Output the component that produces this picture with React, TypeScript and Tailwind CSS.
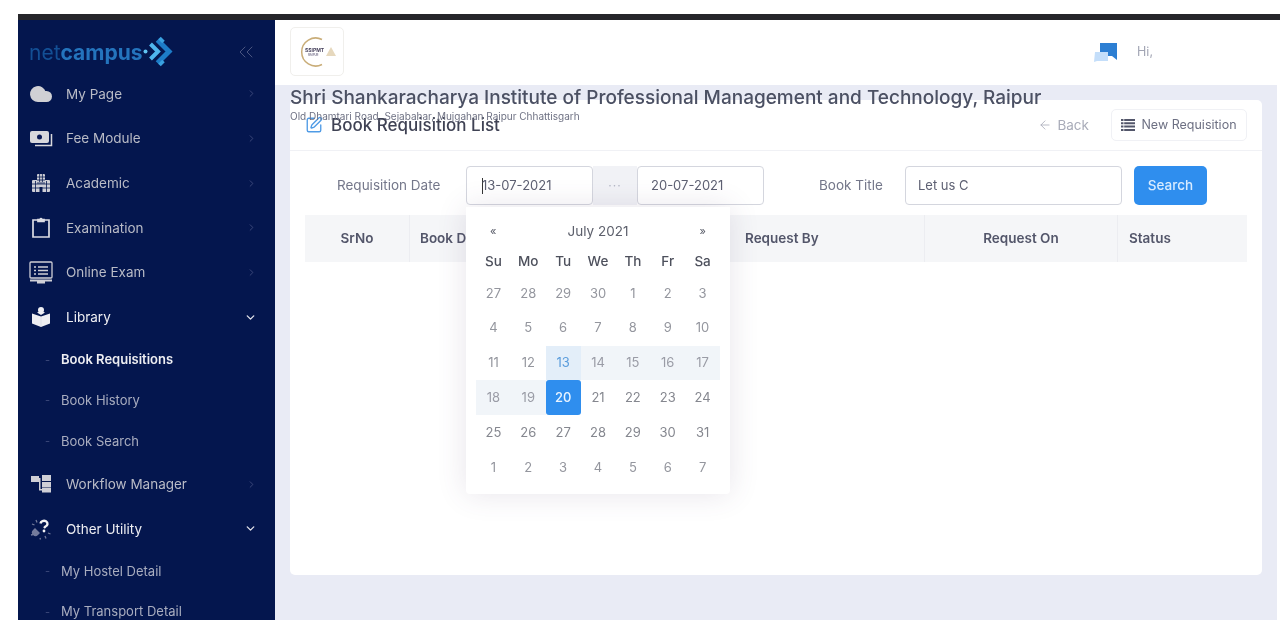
import { ArrowLeft, ChevronDown, ChevronRight, ChevronsLeft, Cloud, SquarePen } from "lucide-react";
import type { ReactNode } from "react";

const font = "font-['Inter','Liberation_Sans',sans-serif]";

function FeeIcon() {
  return (
    <svg width="24" height="22" viewBox="0 0 24 22" fill="none">
      <rect x="1" y="3" width="19" height="12" rx="2" fill="#d8d8dc" />
      <circle cx="10.500" cy="9" r="2.500" fill="#0a1a55" />
      <path d="M22.500 6v11.500H6" stroke="#d8d8dc" strokeWidth="1.500" />
    </svg>
  );
}

function AcademicIcon() {
  return (
    <svg width="18" height="18" viewBox="0 0 18 18" fill="#cfcfd6">
      <path d="M5 1q0-1 1-1h6q1 0 1 1v5h4q1 0 1 1v10q0 1-1 1H1q-1 0-1-1V7q0-1 1-1h4z" />
      <path d="M7.600 0v8M10.400 0v8M5 3h8M5 6h8M5 9h8M0 10h18M0 14h18M3.500 7v11M14.500 7v11" stroke="#04164e" strokeWidth="0.800" fill="none" />
      <path d="M7.500 13h3v5h-3z" fill="#04164e" />
    </svg>
  );
}

function ClipboardIcon() {
  return (
    <svg width="18" height="21" viewBox="0 0 18 21" fill="none" stroke="#dcdce4" strokeWidth="1.700">
      <path d="M6 3H1v17h16V3h-5" />
      <path d="M6 4.500V2.500h2q1-2 2 0h2v2z" fill="#dcdce4" />
    </svg>
  );
}

function ExamIcon() {
  return (
    <svg width="24" height="23" viewBox="0 0 24 23" fill="none" stroke="#cfcfd6" strokeWidth="1.300">
      <rect x="1" y="1" width="22" height="16" rx="1" />
      <path d="M5 6h2M9 6h10M5 9.500h2M9 9.500h10M5 13h2M9 13h10" />
      <path d="M1 19.500h22M8 21.500h8" strokeWidth="1.800" />
    </svg>
  );
}

function LibraryIcon() {
  return (
    <svg width="20" height="20" viewBox="0 0 20 20" fill="#eeeef2">
      <circle cx="10" cy="3" r="3" />
      <path d="M1 6.500l9 3 9-3v10l-9 3.500-9-3.500z" />
      <path d="M6 5.500q4-2 8 0l-4 2.500z" />
      <path d="M10 10v9.500" stroke="#c9ccd8" strokeWidth="0.500" />
    </svg>
  );
}

function WorkflowIcon() {
  return (
    <svg width="20" height="18" viewBox="0 0 20 18" fill="#cfcfd6">
      <rect x="0" y="1" width="8" height="6" />
      <rect x="11" y="0" width="9" height="6" />
      <rect x="11" y="7" width="9" height="5" />
      <rect x="11" y="12.500" width="9" height="5" />
      <path d="M8 3h1.500v11H11v1.500H8z" />
    </svg>
  );
}

function UtilityIcon() {
  return (
    <svg width="22" height="22" viewBox="0 0 22 22" fill="none">
      <path d="M10.500 5.500a3.500 3 0 1 1 5 3l-1.500 1.500" stroke="#f2f2f5" strokeWidth="2.400" />
      <circle cx="14" cy="13" r="1.400" fill="#f2f2f5" />
      <path d="M5 10l5 5-2 2a3.500 3.500 0 0 1-5-5z" fill="#747b9c" />
      <path d="M6 2l1 2.500M2 6l2.500 1M18 15l2.500 1M15 18l1 2.500M1 17l2-.500M10 20l.500 1.500" stroke="#747b9c" strokeWidth="1.300" />
    </svg>
  );
}

function Logo() {
  return (
    <div className="flex items-center">
      <span className="text-[21px] leading-none text-[#134f95]">net</span>
      <span className="text-[21px] leading-none font-bold text-[#2474bd]">campus</span>
      <svg width="32" height="32" viewBox="0 0 31 32" fill="none">
        <circle cx="2" cy="15.500" r="2" fill="#62c3f2" />
        <path d="M7 8l7.500 7.500L7 23" stroke="#4fb6ee" strokeWidth="4" />
        <path d="M14 4l11.500 11.500L14 27" stroke="#1d7cc8" strokeWidth="5" />
        <path d="M16 29l4-4" stroke="#3aa1e0" strokeWidth="3.500" />
        <path d="M16 2l4 4" stroke="#3aa1e0" strokeWidth="3.500" />
      </svg>
    </div>
  );
}

function CollegeLogo() {
  return (
    <svg width="38" height="32" viewBox="0 0 38 32" fill="none">
      <path d="M22 3.500A14 14 0 1 0 22 28.500" stroke="#c9ad78" strokeWidth="1.500" />
      <text x="5" y="15.500" fontSize="5" fontWeight="700" fill="#4b4660">SSIPMT</text>
      <text x="8" y="20" fontSize="2.800" fontWeight="600" fill="#6b6680">RAIPUR</text>
      <path d="M31 11l5 9H26z" fill="#e6d8bd" />
    </svg>
  );
}

function MessageIcon() {
  return (
    <svg width="24" height="20" viewBox="0 0 24 20" fill="none">
      <path d="M6 0h17v17l-5-4H6z" fill="#2d7fd3" />
      <path d="M1 9h13v9H3l-3 1z" fill="#c4defa" />
    </svg>
  );
}

function ListIcon() {
  return (
    <svg width="14" height="12" viewBox="0 0 14 12" fill="#53566a">
      <path d="M0 0h14v2H0zM0 3.300h14v2H0zM0 6.600h14v2H0zM0 10h14v2H0z" />
      <path d="M2.500 0h.700v12h-.700z" fill="#ffffff" />
    </svg>
  );
}

type NavItem = { label: string; icon: ReactNode; open?: boolean; bright?: boolean };

function NavRow({ label, icon, open, bright }: NavItem) {
  return (
    <div className="flex h-[44.700px] shrink-0 items-center">
      <div className="mr-[2px] flex w-[46px] justify-center">{icon}</div>
      <span className={`text-[13.500px] ${bright ? "text-[#eeeef2]" : "text-[#b9bbc6]"}`}>{label}</span>
      <span className="ml-auto mr-[18px]">
        {open ? (
          <ChevronDown size={13} strokeWidth={2.500} className="text-[#e2e2ea]" />
        ) : (
          <ChevronRight size={11} className="text-[#3e4a7c]" />
        )}
      </span>
    </div>
  );
}

function SubRow({ label, active }: { label: string; active?: boolean }) {
  return (
    <div className="flex h-[40.700px] shrink-0 items-center pl-[27px]">
      <span className="w-[16px] text-[11px] text-[#3e4a7c]">-</span>
      <span className={`text-[13px] ${active ? "font-semibold text-[#eeeef2]" : "text-[#a9adbf]"}`}>{label}</span>
    </div>
  );
}

function Sidebar() {
  return (
    <aside className="flex w-[257px] shrink-0 flex-col overflow-hidden bg-[#04164e]">
      <div className="flex h-[50px] shrink-0 items-center justify-between pl-[11px] pr-[17px] pt-[14px]">
        <Logo />
        <ChevronsLeft size={24} strokeWidth={1} className="text-[#4a5580]" />
      </div>
      <div className="h-[1.500px] shrink-0" />
      <NavRow label="My Page" icon={<Cloud size={24} fill="#d0d0d4" stroke="#d0d0d4" />} />
      <NavRow label="Fee Module" icon={<FeeIcon />} />
      <NavRow label="Academic" icon={<AcademicIcon />} />
      <NavRow label="Examination" icon={<ClipboardIcon />} />
      <NavRow label="Online Exam" icon={<ExamIcon />} />
      <NavRow label="Library" icon={<LibraryIcon />} open bright />
      <SubRow label="Book Requisitions" active />
      <SubRow label="Book History" />
      <SubRow label="Book Search" />
      <NavRow label="Workflow Manager" icon={<WorkflowIcon />} />
      <NavRow label="Other Utility" icon={<UtilityIcon />} open bright />
      <SubRow label="My Hostel Detail" />
      <SubRow label="My Transport Detail" />
    </aside>
  );
}

const weeks = [
  [27, 28, 29, 30, 1, 2, 3],
  [4, 5, 6, 7, 8, 9, 10],
  [11, 12, 13, 14, 15, 16, 17],
  [18, 19, 20, 21, 22, 23, 24],
  [25, 26, 27, 28, 29, 30, 31],
  [1, 2, 3, 4, 5, 6, 7],
];

function dayClass(w: number, d: number) {
  if (w === 2 && d === 2) return "bg-[#e3eef9] text-[#5a9cdc]";
  if (w === 3 && d === 2) return "rounded-[3px] bg-[#2f8eee] font-medium text-[#eaf4ff]";
  if ((w === 2 && d > 2) || (w === 3 && d < 2)) return "bg-[#f1f5f9] text-[#9a9ca6]";
  if (w === 3 || w === 4) return "text-[#85878f]";
  return "text-[#94969e]";
}

function DatePicker() {
  return (
    <div className="absolute left-[176px] top-[107px] z-20 w-[264px] rounded-b-[4px] bg-white px-[10px] py-[9px] shadow-[0_0_30px_rgba(82,63,105,0.14)]">
      <div className="flex h-[30px] items-center justify-between px-[14px] text-[#5d606c]">
        <span className="text-[11px]">«</span>
        <span className="text-[13.500px]">July 2021</span>
        <span className="text-[11px]">»</span>
      </div>
      <div className="grid h-[30px] grid-cols-7 items-center text-center text-[13.500px] font-medium text-[#4d505c]">
        {["Su", "Mo", "Tu", "We", "Th", "Fr", "Sa"].map((d) => (
          <span key={d}>{d}</span>
        ))}
      </div>
      <div className="grid grid-cols-7">
        {weeks.map((week, w) =>
          week.map((day, d) => (
            <div key={`${w}-${d}`} className={`flex h-[34.800px] items-center justify-center text-[13px] ${dayClass(w, d)}`}>
              {day}
            </div>
          )),
        )}
      </div>
    </div>
  );
}

function TableHead() {
  return (
    <div className="mx-[15px] mt-[10px] grid h-[47px] grid-cols-[105px_320px_195px_193px_129px] bg-[#f5f6f8] text-[13.500px] font-semibold text-[#53566a]">
      <div className="flex items-center justify-center border-r border-[#ecedf1]">SrNo</div>
      <div className="flex items-center border-r border-[#ecedf1] pl-[10px]">Book Description</div>
      <div className="flex items-center border-r border-[#ecedf1] pl-[15px]">Request By</div>
      <div className="flex items-center justify-center border-r border-[#ecedf1]">Request On</div>
      <div className="flex items-center pl-[11px]">Status</div>
    </div>
  );
}

function FilterRow() {
  const field = "h-[39px] rounded-[4px] border border-[#d4d6de] bg-white text-[13px] text-[#5d6072]";
  return (
    <div className="mt-[15px] flex items-center">
      <span className="ml-[47px] w-[129px] text-[13.500px] text-[#74778a]">Requisition Date</span>
      <div className={`${field} flex w-[127px] items-center border-[#b0cbe8] bg-[#f7fafd] pl-[15px]`}>
        <span className="-mr-px h-[16px] w-px bg-[#333]" />
        13-07-2021
      </div>
      <div className="flex h-[39px] w-[44px] items-center justify-center bg-[#f1f2f6] text-[12px] tracking-[1px] text-[#b0b3c0]">···</div>
      <div className={`${field} flex w-[127px] items-center pl-[13px]`}>20-07-2021</div>
      <span className="ml-[55px] w-[86px] text-[13.500px] text-[#74778a]">Book Title</span>
      <div className={`${field} flex w-[217px] items-center pl-[12px] text-[#4b4e60]`}>Let us C</div>
      <button className="ml-[12px] h-[39px] w-[73px] rounded-[5px] bg-[#2f8eee] text-[13.500px] font-medium text-[#d9ecff]">Search</button>
    </div>
  );
}

export default function App() {
  return (
    <div className={`flex h-[628px] w-[1280px] flex-col overflow-hidden bg-white pb-[8px] pl-[18px] pt-[14px] blur-[0.4px] ${font}`}>
      <div className="h-[6px] shrink-0 bg-[#26262a]" />
      <div className="flex min-h-0 flex-1 pr-[3px]">
        <Sidebar />
        <main className="relative flex flex-1 flex-col bg-[#e9ebf5]">
          <header className="flex h-[65px] shrink-0 items-center bg-white pl-[15px]">
            <div className="flex h-[49px] w-[54px] -translate-y-[1px] items-center justify-center rounded-[5px] border border-[#f0efec] bg-white pl-[3px]">
              <CollegeLogo />
            </div>
            <div className="ml-auto mr-[124px] flex items-center gap-[19px]">
              <MessageIcon />
              <span className="text-[12.500px] text-[#a2a5b4]">Hi,</span>
            </div>
          </header>
          <div className="absolute left-[15px] top-[66px] z-10">
            <h1 className="text-[19px] font-medium leading-[24px] text-[#4b5063]">Shri Shankaracharya Institute of Professional Management and Technology, Raipur</h1>
            <p className="text-[10px] leading-[12px] text-[#6e7183]">Old Dhamtari Road, Sejabahar, Mujgahan Raipur Chhattisgarh</p>
          </div>
          <section className="relative mx-[15px] mt-[15px] h-[475px] rounded-[5px] bg-white">
            <div className="flex h-[51px] items-center border-b border-[#f0f1f5] pl-[15px] pr-[15px]">
              <SquarePen size={18} strokeWidth={1.800} className="text-[#4f9be6]" />
              <h2 className="ml-[8px] translate-y-[1px] text-[17px] font-medium text-[#3f4254]">Book Requisition List</h2>
              <div className="ml-auto flex items-center text-[13.500px] text-[#a9acb9]">
                <ArrowLeft size={14} strokeWidth={1.400} className="mr-[5px]" />
                Back
              </div>
              <div className="ml-[22px] flex h-[32px] w-[136px] items-center justify-center gap-[6px] rounded-[5px] border border-[#f0f1f5] text-[12.500px] text-[#6d7083]">
                <ListIcon />
                New Requisition
              </div>
            </div>
            <FilterRow />
            <TableHead />
            <DatePicker />
          </section>
        </main>
      </div>
    </div>
  );
}
